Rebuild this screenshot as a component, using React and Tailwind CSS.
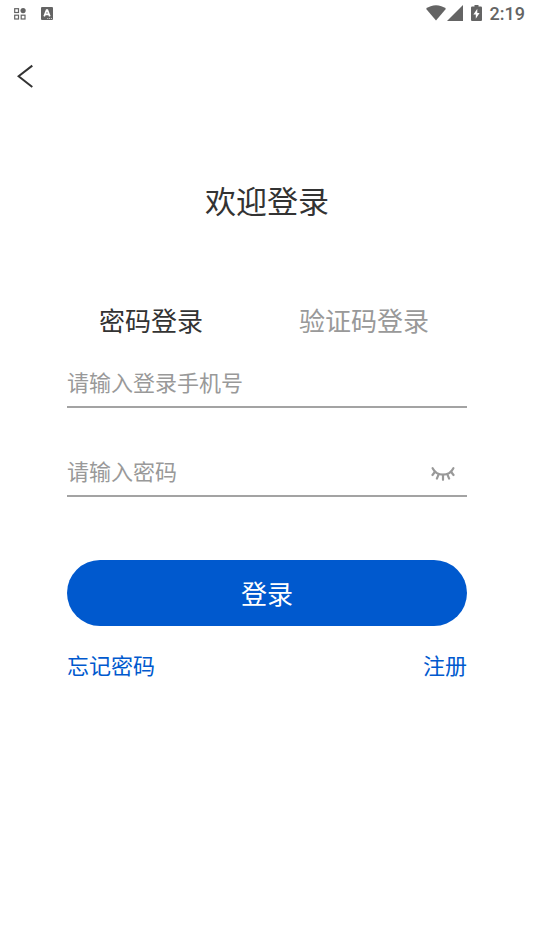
import { useState } from "react";

const tabs = [
  { id: "password", label: "密码登录" },
  { id: "code", label: "验证码登录" },
];

function StatusBar() {
  return (
    <div className="flex h-7 items-center justify-between pr-[9px] pl-[14px] text-[#646464]">
      <div className="flex items-center gap-[15px] pb-px">
        <svg className="h-3 w-3" viewBox="0 0 12 12" fill="none" stroke="currentColor" aria-hidden="true">
          <rect x="0.7" y="0.7" width="3.8" height="3.8" strokeWidth="1.2" />
          <rect x="0.7" y="7.2" width="3.8" height="3.8" strokeWidth="1.2" />
          <rect x="7.2" y="7.2" width="3.8" height="3.8" strokeWidth="1.2" />
          <circle cx="9.1" cy="2.6" r="2.6" fill="currentColor" stroke="none" />
        </svg>
        <svg className="h-[13px] w-3" viewBox="0 0 12 13" aria-hidden="true">
          <rect width="12" height="13" rx="1" fill="currentColor" />
          <path d="M3.2 9.4 5.6 3.2h.8l2.4 6.2M4.2 7.4h3.6" fill="none" stroke="#fff" strokeWidth="1.7" />
          <path d="M6.3 11.5h1M8.1 11.5h1M9.9 11.5h1" stroke="#fff" strokeWidth="0.7" />
        </svg>
      </div>
      <div className="flex items-center">
        <div className="flex items-center pb-0.5">
          <svg className="h-4 w-5" viewBox="0 0 20 16" fill="currentColor" aria-hidden="true">
            <path d="M0 3.8C5.6-.9 14.4-.9 20 3.8L10 15.6Z" />
          </svg>
          <svg className="ml-px h-4 w-4" viewBox="0 0 16 16" fill="currentColor" aria-hidden="true">
            <path d="M16 0v16H0Z" />
          </svg>
          <svg className="ml-2 h-4 w-[11px]" viewBox="0 0 11 16" aria-hidden="true">
            <path d="M3.5 0h4v1.6h2.400Q11 1.600 11 2.700v12.200q0 1.100-1.100 1.100H1.100Q0 16 0 14.900V2.700Q0 1.600 1.100 1.600h2.400Z" fill="currentColor" />
            <path d="M6.300 3.800 2.400 9.600h2.400v4.100L8.600 8H6.300Z" fill="#fff" />
          </svg>
        </div>
        <span className="ml-2 font-[Roboto,sans-serif] text-lg leading-5 font-medium">2:19</span>
      </div>
    </div>
  );
}

function ClosedEyeIcon() {
  return (
    <svg
      className="h-5 w-6"
      viewBox="0 -5 24 20"
      fill="none"
      stroke="currentColor"
      strokeWidth="2.2"
      strokeLinecap="round"
      aria-hidden="true"
    >
      <path d="M1.600 1.200C6 9.800 18 9.800 22.400 1.200" />
      <path d="M4 4.800 1.500 8M7.700 7.200 5.900 11.600M12 7.800v5M16.300 7.200l1.800 4.400M20 4.800 22.500 8" />
    </svg>
  );
}

export default function App() {
  const [activeTab, setActiveTab] = useState("password");
  const [showPassword, setShowPassword] = useState(false);

  return (
    <div className="min-h-screen bg-white font-['Noto_Sans_CJK_SC',sans-serif] text-[#333]">
      <StatusBar />

      <header className="flex h-24 items-center px-[17px]">
        <button type="button" aria-label="返回">
          <svg className="h-6 w-4" viewBox="0 0 16 24" fill="none" stroke="currentColor" strokeWidth="2" aria-hidden="true">
            <path d="M15.300 1.600 1.600 12.300l13.700 10.700" />
          </svg>
        </button>
      </header>

      <main className="px-[67px]">
        <h1 className="mt-[54px] text-center text-[31px] leading-11">欢迎登录</h1>

        <div className="mt-20 flex justify-between pr-[38px] pl-8" role="tablist">
          {tabs.map((tab) => (
            <button
              key={tab.id}
              type="button"
              role="tab"
              aria-selected={activeTab === tab.id}
              onClick={() => setActiveTab(tab.id)}
              className={`text-[26px] leading-9 ${activeTab === tab.id ? "text-[#333]" : "text-[#999]"}`}
            >
              {tab.label}
            </button>
          ))}
        </div>

        <form onSubmit={(e) => e.preventDefault()}>
          <div className="mt-[21px] flex h-[49px] border-b-2 border-[#a3a3a3]">
            <input
              type="tel"
              aria-label="手机号"
              placeholder="请输入登录手机号"
              className="min-w-0 flex-1 pb-1 text-[22px] leading-8 outline-none placeholder:text-[#999]"
            />
          </div>

          <div className="mt-10 flex h-[49px] border-b-2 border-[#a3a3a3] pr-3">
            <input
              type={showPassword ? "text" : "password"}
              aria-label="密码"
              placeholder="请输入密码"
              className="min-w-0 flex-1 pb-1 text-[22px] leading-8 outline-none placeholder:text-[#999]"
            />
            <button
              type="button"
              aria-label="显示密码"
              onClick={() => setShowPassword(!showPassword)}
              className="text-[#999]"
            >
              <ClosedEyeIcon />
            </button>
          </div>

          <button type="submit" className="mt-[63px] h-[66px] w-full rounded-full bg-[#0059ce] text-[26px] leading-9 text-white">
            登录
          </button>
        </form>

        <div className="mt-[22px] flex justify-between text-[22px] leading-8 text-[#0059ce]">
          <a href="#forgot">忘记密码</a>
          <a href="#register">注册</a>
        </div>
      </main>
    </div>
  );
}
